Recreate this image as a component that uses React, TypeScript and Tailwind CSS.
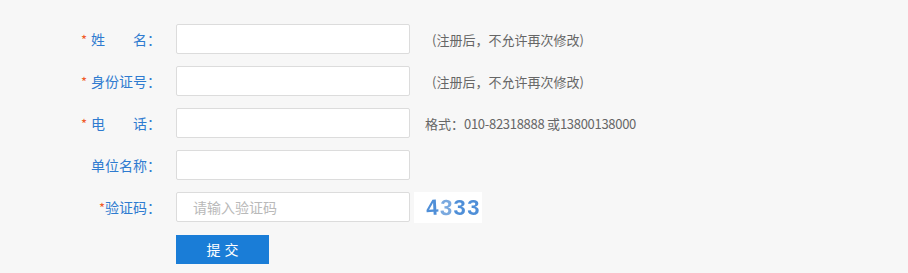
import React from "react";

const font = { fontFamily: '"Noto Sans CJK SC", "Noto Sans", sans-serif' };

function Label({ children, req, spaced }: { children: React.ReactNode; req?: boolean; spaced?: boolean }) {
  return (
    <div className="w-[161px] shrink-0 flex justify-end items-center text-[14px] text-[#2f7bd0] leading-none">
      {req && <span className={`text-[#f05a28] text-[13px] ${spaced ? "mr-[4px]" : ""}`}>*</span>}
      {children}
    </div>
  );
}

function Input({ placeholder }: { placeholder?: string }) {
  return (
    <input
      className="ml-[15px] w-[234px] h-[30px] shrink-0 bg-white border border-[#dcdcdc] rounded-[2px] pl-[16px] text-[14px] outline-none placeholder:text-[#b9b9b9]"
      style={font}
      placeholder={placeholder}
    />
  );
}

function Hint({ children, ml }: { children: React.ReactNode; ml: string }) {
  return <span className={`${ml} text-[13px] text-[#666666] leading-none`}>{children}</span>;
}

export default function App() {
  return (
    <div className="w-[908px] h-[273px] bg-[#f7f7f7] pt-[24px]" style={font}>
      <div className="flex flex-col gap-[12px]">
        <div className="flex items-center h-[30px]">
          <Label req spaced>
            <span className="inline-flex w-[56px] justify-between">
              <span>姓</span>
              <span>名</span>
            </span>
            <span>：</span>
          </Label>
          <Input />
          <Hint ml="ml-[22px]">(注册后，不允许再次修改)</Hint>
        </div>
        <div className="flex items-center h-[30px]">
          <Label req spaced>身份证号：</Label>
          <Input />
          <Hint ml="ml-[22px]">(注册后，不允许再次修改)</Hint>
        </div>
        <div className="flex items-center h-[30px]">
          <Label req spaced>
            <span className="inline-flex w-[56px] justify-between">
              <span>电</span>
              <span>话</span>
            </span>
            <span>：</span>
          </Label>
          <Input />
          <Hint ml="ml-[15px]">
            格式：<span className="tracking-[-0.3px]">010-82318888 </span>或<span className="tracking-[-0.3px]">13800138000</span>
          </Hint>
        </div>
        <div className="flex items-center h-[30px]">
          <Label>单位名称：</Label>
          <Input />
        </div>
        <div className="flex items-center h-[30px]">
          <Label req>验证码：</Label>
          <Input placeholder="请输入验证码" />
          <div className="ml-[4px] w-[68px] h-[31px] bg-white flex items-center justify-end pr-[1px] overflow-hidden">
            <span
              className="text-[22px] font-bold text-[#4f8fd8] tracking-[1.5px] leading-none blur-[0.3px] pt-[2px]"
              style={{ fontFamily: '"Liberation Sans", sans-serif' }}
            >
              <span className="inline-block -rotate-3">4</span>
              <span className="inline-block rotate-3 text-[#7aa9df]">3</span>
              <span className="inline-block">3</span>
              <span className="inline-block">3</span>
            </span>
          </div>
        </div>
        <div className="flex pt-[1px]">
          <button
            className="ml-[176px] w-[93px] h-[29px] bg-[#1a7dd7] text-white text-[14px] tracking-[4px] pl-[4px]"
            style={font}
          >
            提交
          </button>
        </div>
      </div>
    </div>
  );
}
